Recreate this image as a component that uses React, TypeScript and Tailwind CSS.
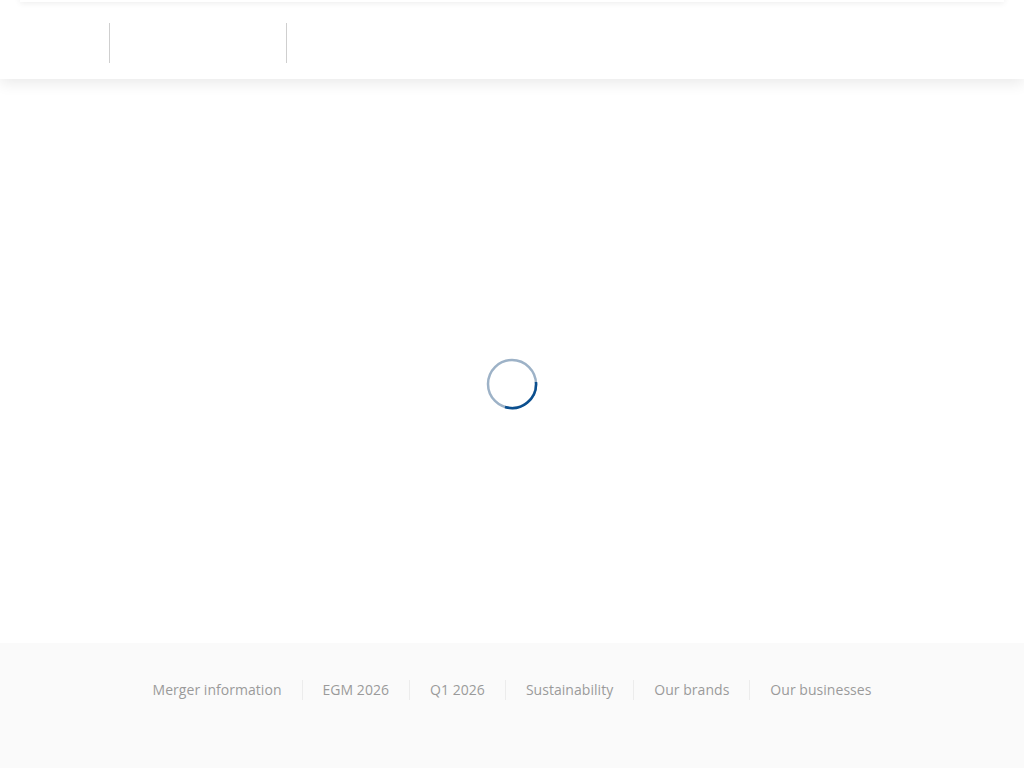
import React from "react";

const links = ["Merger information", "EGM 2026", "Q1 2026", "Sustainability", "Our brands", "Our businesses"];

export default function App() {
  return (
    <div className="relative flex min-h-[768px] w-full flex-col bg-white" style={{ fontFamily: '"Open Sans", "Noto Sans", sans-serif' }}>
      <div className="absolute left-[20px] right-[20px] top-[-6px] z-30 h-[8px] bg-white shadow-[0_1px_6px_rgba(0,0,0,0.08)]" />
      <header className="relative z-20 flex h-[79px] items-start bg-white pt-[23px] shadow-[0_4px_14px_rgba(0,0,0,0.09)]">
        <div className="ml-[109px] h-[40px] w-px bg-[#cfcfcf]" />
        <div className="ml-[176px] h-[40px] w-px bg-[#cfcfcf]" />
      </header>
      <main className="flex h-[564px] items-center justify-center bg-white pt-[46px]">
        <svg width="52" height="52" viewBox="0 0 52 52">
          <circle cx="26" cy="26" r="24" fill="none" stroke="#9db2c7" strokeWidth="2.5" />
          <path d="M 50 24 A 24 24 0 0 1 19 49" fill="none" stroke="#0b4f8f" strokeWidth="2.5" />
        </svg>
      </main>
      <footer className="flex h-[125px] justify-center bg-[#fafafa] pt-[36px]">
        <nav className="flex h-[22px] items-center">
          {links.map((l, i) => (
            <React.Fragment key={l}>
              {i > 0 && <span className="mx-[20px] h-[20px] w-px bg-[#ececec]" />}
              <a className="text-[14px] leading-[22px] tracking-[0.04px] text-[#9a9a9a]">{l}</a>
            </React.Fragment>
          ))}
        </nav>
      </footer>
    </div>
  );
}
